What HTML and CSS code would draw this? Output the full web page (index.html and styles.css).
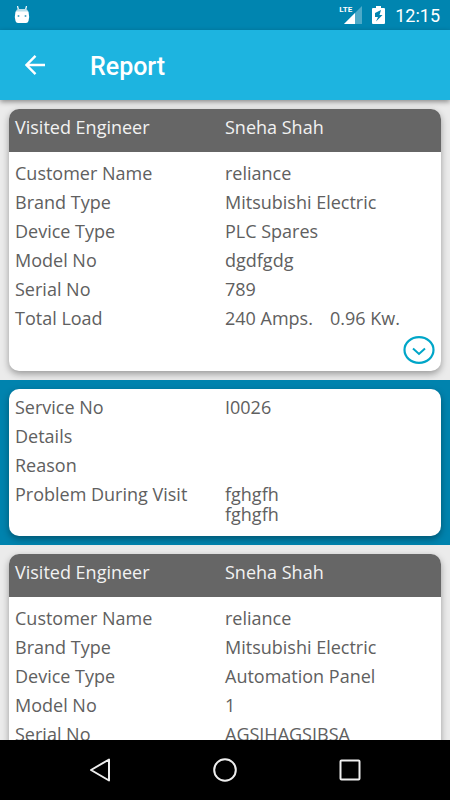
FILE: index.html
```html
<!DOCTYPE html>
<html lang="en">
<head>
<meta charset="utf-8">
<meta name="viewport" content="width=device-width, initial-scale=1">
<title>Report</title>
<link rel="stylesheet" href="styles.css">
</head>
<body>
<div class="status">
  <svg class="status-app" width="16" height="18" viewBox="0 0 16 18" aria-hidden="true">
    <path d="M3.5 0L4.5 4M12.500 0L11.500 4" stroke="#fff" stroke-width="1.200" fill="none"/>
    <path d="M2 6Q2 3 5 3H11Q14 3 14 6Z" fill="#b9dfea"/>
    <path d="M1.500 5.500H14.500Q15.800 11 14.500 15Q14 17 12 17H4Q2 17 1.500 15Q0.200 11 1.500 5.500Z" fill="#fff"/>
    <circle cx="4.500" cy="10" r="1" fill="#4aa5c4"/><circle cx="11.500" cy="10" r="1" fill="#4aa5c4"/>
  </svg>
  <div class="status-right">
    <span class="signal">
      <span class="lte">LTE</span>
      <svg width="18" height="18" viewBox="0 0 18 18" aria-hidden="true">
        <path d="M18 0V18H0Z" fill="#4daac8"/><path d="M11 7V18H0Z" fill="#fff"/>
      </svg>
    </span>
    <svg width="13" height="18" viewBox="0 0 13 18" aria-hidden="true">
      <path d="M4 0H9V2H12Q13 2 13 3V17Q13 18 12 18H1Q0 18 0 17V3Q0 2 1 2H4Z" fill="#fff"/>
      <path d="M9 4L3 7V11H6L4 15.500L10.500 9H7.500Z" fill="#0085b0"/>
    </svg>
    <time class="clock">12:15</time>
  </div>
</div>
<header class="appbar">
  <button class="back" type="button" aria-label="Back">
    <svg width="20" height="20" viewBox="0 0 20 20" aria-hidden="true"><path d="M20 10H1.500M10.500 0.900L1.500 10L10.500 19.100" fill="none" stroke="#fff" stroke-width="2.400"/></svg>
  </button>
  <h1 class="title">Report</h1>
</header>
<main class="content">
  <section class="band">
    <article class="card">
      <dl class="card-head"><dt>Visited Engineer</dt><dd>Sneha Shah</dd></dl>
      <dl class="fields">
        <dt>Customer Name</dt><dd>reliance</dd>
        <dt>Brand Type</dt><dd>Mitsubishi Electric</dd>
        <dt>Device Type</dt><dd>PLC Spares</dd>
        <dt>Model No</dt><dd>dgdfgdg</dd>
        <dt>Serial No</dt><dd>789</dd>
        <dt>Total Load</dt><dd class="split"><span>240 Amps.</span><span>0.96 Kw.</span></dd>
      </dl>
      <div class="card-foot">
        <button class="toggle" type="button" aria-label="Show details">
          <svg width="32" height="28" viewBox="0 0 32 28" aria-hidden="true"><ellipse cx="16" cy="14" rx="14.500" ry="12.800" fill="none" stroke="#00a6c8" stroke-width="2.200"/><path d="M10 12.500L16 18L22 12.500" fill="none" stroke="#00a6c8" stroke-width="2"/></svg>
        </button>
      </div>
    </article>
  </section>
  <section class="band band-detail">
    <article class="card">
      <dl class="fields fields-detail">
        <dt>Service No</dt><dd>I0026</dd>
        <dt>Details</dt><dd></dd>
        <dt>Reason</dt><dd></dd>
        <dt>Problem During Visit</dt><dd>fghgfh<br>fghgfh</dd>
      </dl>
    </article>
  </section>
  <section class="band">
    <article class="card">
      <dl class="card-head"><dt>Visited Engineer</dt><dd>Sneha Shah</dd></dl>
      <dl class="fields">
        <dt>Customer Name</dt><dd>reliance</dd>
        <dt>Brand Type</dt><dd>Mitsubishi Electric</dd>
        <dt>Device Type</dt><dd>Automation Panel</dd>
        <dt>Model No</dt><dd>1</dd>
        <dt>Serial No</dt><dd>AGSIHAGSIBSA</dd>
      </dl>
    </article>
  </section>
</main>
<nav class="navbar">
  <button type="button" aria-label="Back"><svg width="24" height="24" viewBox="0 0 24 24" aria-hidden="true"><path d="M21 1.500V22.500L3 12Z" fill="none" stroke="#eee" stroke-width="2" stroke-linejoin="round"/></svg></button>
  <button type="button" aria-label="Home"><svg width="24" height="24" viewBox="0 0 24 24" aria-hidden="true"><circle cx="12" cy="12" r="10.800" fill="none" stroke="#eee" stroke-width="2"/></svg></button>
  <button type="button" aria-label="Recent apps"><svg width="24" height="24" viewBox="0 0 24 24" aria-hidden="true"><rect x="2.500" y="2.500" width="19" height="19" rx="1" fill="none" stroke="#eee" stroke-width="2"/></svg></button>
</nav>
</body>
</html>
```
FILE: styles.css
```css
* { box-sizing: border-box; }

body {
  margin: 0;
  height: 100vh;
  display: flex;
  flex-direction: column;
  overflow: hidden;
  background: #ebebeb;
  color: #606060;
  font: 400 18px/20px "Open Sans", sans-serif;
}

button {
  display: flex;
  align-items: center;
  justify-content: center;
  padding: 0;
  border: 0;
  background: none;
}

svg { display: block; }

.status {
  flex: none;
  height: 30px;
  padding: 0 10px 0 14px;
  display: flex;
  align-items: center;
  justify-content: space-between;
  background: #0085b0;
  color: #fff;
}

.status-right { display: flex; align-items: center; gap: 10px; }

.signal { position: relative; }

.lte {
  position: absolute;
  right: 10px;
  top: 0;
  font: 700 8px/8px Roboto, sans-serif;
}

.clock { padding-top: 2px; font: 400 18px/20px Roboto, sans-serif; }

.appbar {
  flex: none;
  height: 70px;
  padding-left: 25px;
  display: flex;
  align-items: center;
  gap: 45px;
  background: #1db4e0;
  box-shadow: 0 2px 5px rgba(0, 0, 0, .4);
  position: relative;
  z-index: 1;
}

.title {
  margin: 0;
  padding-top: 3px;
  color: #fff;
  font: 500 25px/32px Roboto, sans-serif;
}

.content { flex: 1; min-height: 0; overflow: hidden; }

.band { padding: 9px; }

.band-detail { background: #0083ae; }

.card {
  border-radius: 10px;
  overflow: hidden;
  background: #fff;
  box-shadow: 0 3px 7px rgba(0, 0, 0, .35);
}

dl {
  margin: 0;
  display: grid;
  grid-template-columns: 1fr 1fr;
  row-gap: 9px;
}

dd { margin: 0; }

.card-head {
  padding: 8px 6px 15px;
  background: #666;
  color: #f2f2f2;
}

.fields { padding: 11px 6px 8px; }

.fields-detail { padding: 8px 6px 12px; }

.split { display: grid; grid-template-columns: 1fr 1fr; }

.card-foot {
  padding: 0 6px 7px;
  display: flex;
  justify-content: flex-end;
}

.navbar {
  flex: none;
  height: 60px;
  padding: 0 38px;
  display: flex;
  background: #000;
}

.navbar button { flex: 1; }
```
